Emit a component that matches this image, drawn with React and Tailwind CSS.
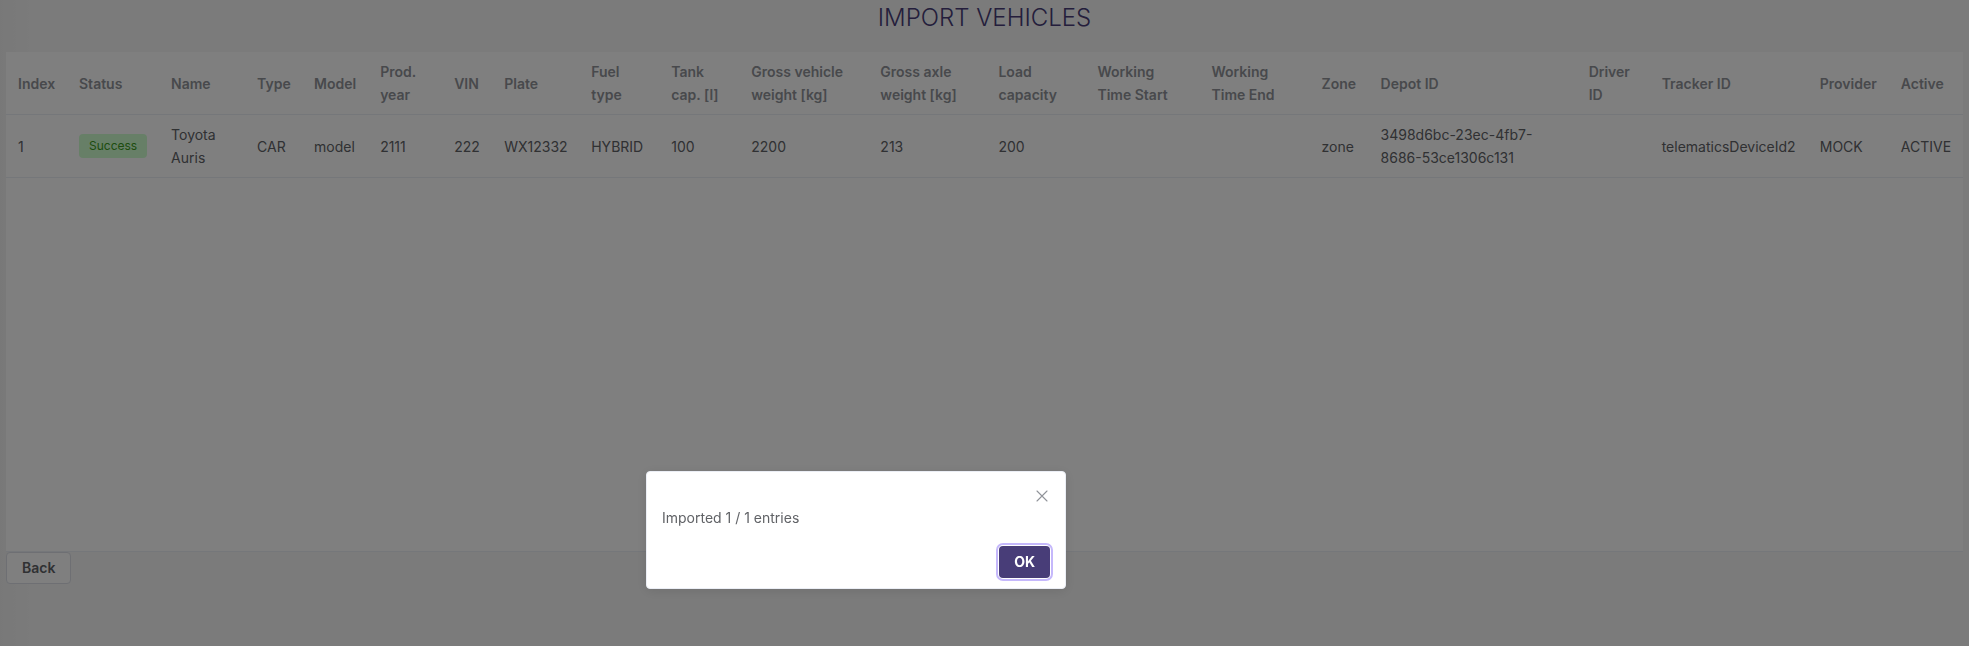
import { useState } from "react";

const columns = [
  { label: "Index", key: "index", width: "w-[61px]" },
  { label: "Status", key: "status", width: "w-[92px]" },
  { label: "Name", key: "name", width: "w-[86px]" },
  { label: "Type", key: "type", width: "w-[57px]" },
  { label: "Model", key: "model", width: "w-[66px]" },
  { label: "Prod. year", key: "year", width: "w-[74px]" },
  { label: "VIN", key: "vin", width: "w-[50px]" },
  { label: "Plate", key: "plate", width: "w-[87px]" },
  { label: "Fuel type", key: "fuel", width: "w-[80px]" },
  { label: "Tank cap. [l]", key: "tank", width: "w-[80px]" },
  { label: "Gross vehicle weight [kg]", key: "vehicleWeight", width: "w-[129px]" },
  { label: "Gross axle weight [kg]", key: "axleWeight", width: "w-[118px]" },
  { label: "Load capacity", key: "load", width: "w-[99px]" },
  { label: "Working Time Start", key: "timeStart", width: "w-[114px]" },
  { label: "Working Time End", key: "timeEnd", width: "w-[110px]" },
  { label: "Zone", key: "zone", width: "w-[59px]" },
  { label: "Depot ID", key: "depot", width: "w-[208px]" },
  { label: "Driver ID", key: "driver", width: "w-[73px]" },
  { label: "Tracker ID", key: "tracker", width: "w-[158px]" },
  { label: "Provider", key: "provider", width: "w-[81px]" },
  { label: "Active", key: "active", width: "w-[74px]" },
];

const vehicles = [
  {
    index: 1,
    status: "Success",
    name: "Toyota Auris",
    type: "CAR",
    model: "model",
    year: "2111",
    vin: "222",
    plate: "WX12332",
    fuel: "HYBRID",
    tank: "100",
    vehicleWeight: "2200",
    axleWeight: "213",
    load: "200",
    timeStart: "",
    timeEnd: "",
    zone: "zone",
    depot: "3498d6bc-23ec-4fb7-8686-53ce1306c131",
    driver: "",
    tracker: "telematicsDeviceId2",
    provider: "MOCK",
    active: "ACTIVE",
  },
];

const StatusTag = ({ children }) => (
  <span className="block h-6 w-fit rounded bg-[#ceffcf] px-2.5 text-xs leading-6 text-[#3c9a20]">
    {children}
  </span>
);

const VehiclesTable = () => {
  return (
    <div className="min-h-[500px] border-b border-[#ebeef5] bg-white">
      <table className="w-full table-fixed border-separate border-spacing-0 text-left text-sm leading-[23px]">
        <thead className="text-[#909399]">
          <tr>
            {columns.map((col) => (
              <th key={col.key} className={`${col.width} border-b border-[#ebeef5] px-3 py-2 font-semibold`}>
                {col.label}
              </th>
            ))}
          </tr>
        </thead>
        <tbody className="text-[#606266]">
          {vehicles.map((vehicle) => (
            <tr key={vehicle.index}>
              {columns.map((col) => (
                <td key={col.key} className="border-b border-[#ebeef5] px-3 py-2">
                  {col.key === "status" ? <StatusTag>{vehicle.status}</StatusTag> : vehicle[col.key]}
                </td>
              ))}
            </tr>
          ))}
        </tbody>
      </table>
    </div>
  );
};

const ImportDialog = ({ onClose }) => {
  return (
    <div className="fixed inset-0 flex items-start justify-center bg-black/50 pt-[471px] pr-[257px]">
      <div
        role="dialog"
        aria-label="Import result"
        className="w-[420px] rounded border border-[#ebeef5] bg-white px-[15px] pb-2.5 shadow-[0_2px_12px_rgba(0,0,0,0.1)]"
      >
        <div className="flex justify-end pt-4">
          <button type="button" aria-label="Close" onClick={onClose} className="text-[#909399]">
            <svg viewBox="0 0 16 16" className="size-4" fill="none" stroke="currentColor" strokeWidth="1.1" strokeLinecap="round">
              <path d="M3 3l10 10M13 3L3 13" />
            </svg>
          </button>
        </div>
        <p className="pt-0.5 text-sm leading-6 text-[#606266]">Imported 1 / 1 entries</p>
        <div className="flex justify-end pt-4">
          <button
            type="button"
            onClick={onClose}
            className="h-8 rounded bg-[#483d78] px-[15px] text-sm font-bold text-white outline-2 outline-offset-1 outline-[#c5b8fb]"
          >
            OK
          </button>
        </div>
      </div>
    </div>
  );
};

const App = () => {
  const [open, setOpen] = useState(true);

  return (
    <div className="min-h-screen bg-[#f6f6f6] bg-linear-to-r from-black/2 to-transparent to-[32px] px-1.5 font-['Inter',sans-serif]">
      <h1 className="pt-0.5 pb-[18px] text-center text-2xl font-light text-[#483d78]">IMPORT VEHICLES</h1>
      <VehiclesTable />
      <button
        type="button"
        className="block h-8 rounded border border-[#dcdfe6] bg-white px-[15px] text-sm font-semibold text-[#606266]"
      >
        Back
      </button>
      {open && <ImportDialog onClose={() => setOpen(false)} />}
    </div>
  );
};

export default App;
